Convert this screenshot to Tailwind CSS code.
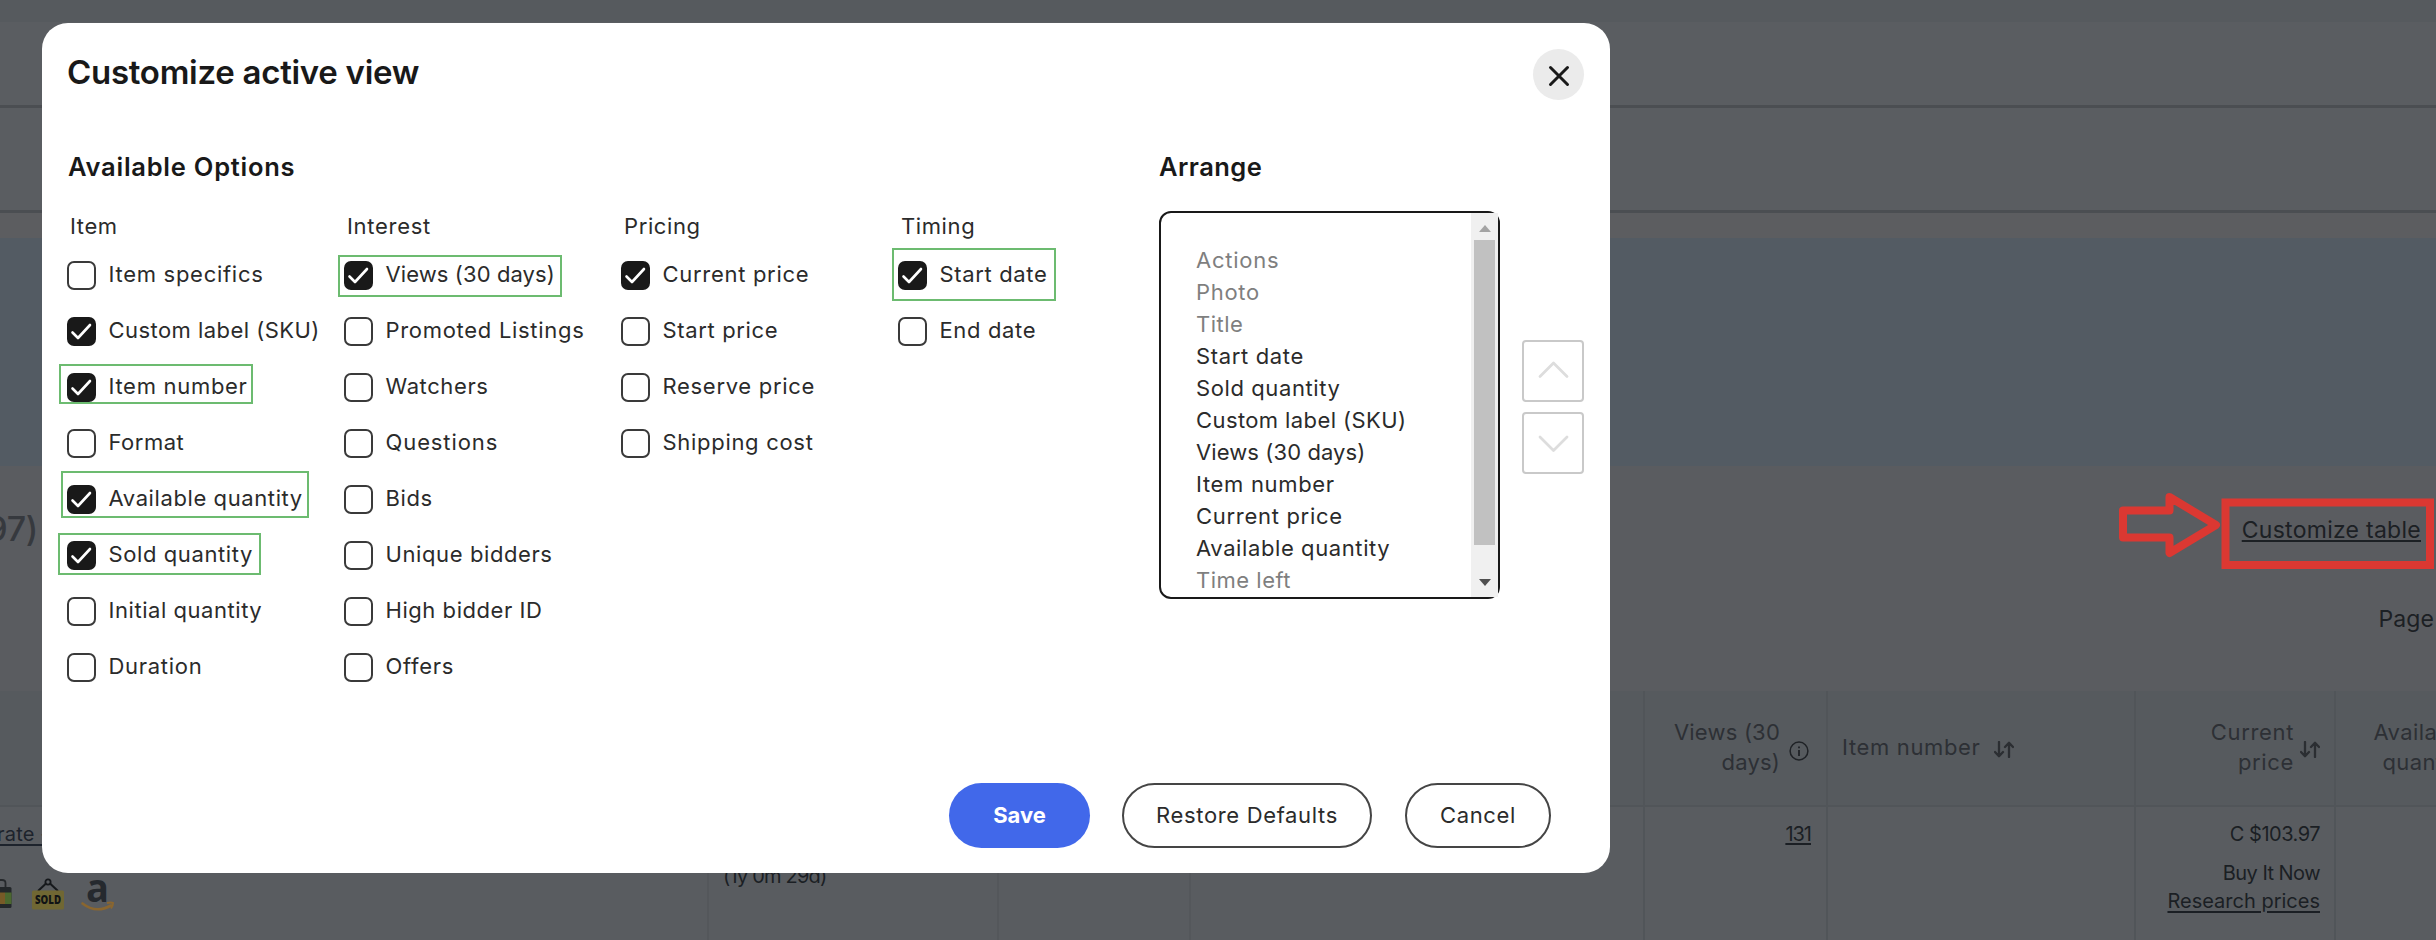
<!DOCTYPE html>
<html lang="en">
<head>
<meta charset="utf-8">
<title>Customize active view</title>
<script src="https://cdn.jsdelivr.net/npm/@tailwindcss/browser@4"></script>
</head>
<body class="font-['Inter','Liberation_Sans',sans-serif]">
<svg class="hidden">
  <symbol id="check" viewBox="0 0 29 29"><path d="M5.500 15.500 L11 21 L23 8" fill="none" stroke="#fff" stroke-width="2.600" stroke-linecap="round" stroke-linejoin="round"/></symbol>
  <symbol id="sort" viewBox="0 0 20 17"><path d="M5 1 V15 M1 11 L5 15.200 L9 11 M15 16 V2 M11 6 L15 1.800 L19 6" fill="none" stroke="#2b2e32" stroke-width="2.300" stroke-linecap="round" stroke-linejoin="round"/></symbol>
</svg>
<div class="relative w-[2436px] h-[940px] overflow-hidden bg-[#5a5c60] flex flex-col">

  <!-- Page behind the dialog -->
  <div class="h-[22px] bg-[#565a5e] shrink-0"></div>
  <div class="h-[86px] bg-[#5a5d61] border-b-[3px] border-[#4b4e52] shrink-0"></div>
  <div class="h-[105px] bg-[#5a5d61] border-b-[3px] border-[#4b4e52] shrink-0"></div>
  <div class="h-[25px] bg-[#5c5d60] shrink-0"></div>
  <div class="h-[228px] bg-[#535b63] shrink-0"></div>
  <div class="h-[225px] shrink-0 flex justify-between">
    <div class="w-[38px] pt-[43px] flex justify-end text-[34px] leading-[40px] font-medium text-[#36393e] tracking-[-0.3px]"><span>97)</span></div>
    <div class="flex flex-col items-end pt-[49px] text-[#1c2024]">
      <a class="mr-[15px] text-[23px] leading-[30px] tracking-[0.27px] underline decoration-2 underline-offset-[2px]">Customize table</a>
      <span class="mr-[2px] mt-[59px] text-[23px] leading-[30px] tracking-[0.1px]">Page</span>
    </div>
  </div>

  <div class="shrink-0 w-[2496px] h-[116px] bg-[#565a5e] border-b-2 border-[#515559] grid grid-cols-[707px_290px_192px_454px_183px_308px_200px_162px] text-[22px] leading-[30px] text-[#2d3035]">
    <div></div>
    <div></div>
    <div></div>
    <div></div>
    <div class="border-l-2 border-[#515559] flex items-center justify-end pr-[17px] gap-[9px] pb-[2px]">
      <div class="text-right tracking-[0.2px]">Views (30<br>days)</div>
      <svg class="w-5 h-5 mt-[7px]" viewBox="0 0 20 20" fill="none" stroke="#1f2226"><circle cx="10" cy="10" r="8.900" stroke-width="1.500"/><path d="M10 9 V15 M10 5.500 V7.300" stroke-width="1.800"/></svg>
    </div>
    <div class="border-l-2 border-[#515559] flex items-center pl-[14px] gap-[13px] pb-[2px]">
      <span class="tracking-[0.65px]">Item number</span>
      <svg class="w-5 h-[17px] mt-[5px]"><use href="#sort"/></svg>
    </div>
    <div class="border-l-2 border-[#515559] flex items-center justify-end pr-[14px] gap-[6px] pb-[2px]">
      <div class="text-right tracking-[0.65px]">Current<br>price</div>
      <svg class="w-5 h-[17px] mt-[5px]"><use href="#sort"/></svg>
    </div>
    <div class="border-l-2 border-[#515559] flex items-center justify-end pr-[26px] pb-[2px]">
      <div class="text-right tracking-[0.4px]">Available<br>quantity</div>
    </div>
  </div>

  <div class="shrink-0 w-[2496px] h-[133px] bg-[#595c60] grid grid-cols-[707px_290px_192px_454px_183px_308px_200px_162px] text-[20px] leading-[28px] text-[#1b1f24]">
    <div class="pt-[13px]">
      <div class="underline decoration-2 underline-offset-[3px] text-[#1d232c] -ml-[3px] whitespace-pre tracking-[0.2px]">rate - </div>
      <div class="flex items-start mt-[30px]">
        <svg class="w-[12px] h-[32px]" viewBox="0 0 12 32"><path d="M-4 10 V5 Q-4 2 0 2 H2 Q5.500 2 5.500 5 V10" fill="none" stroke="#26292c" stroke-width="1.800"/><rect x="-6" y="9" width="17.500" height="21" rx="1.500" fill="#23272a"/><rect x="-6" y="14.500" width="11" height="11.500" fill="#775a27"/><rect x="5" y="14.500" width="6.500" height="11.500" fill="#4b682f"/></svg>
        <svg class="w-[32px] h-[32px] ml-[20px]" viewBox="0 0 32 32"><circle cx="16" cy="4" r="2.600" fill="none" stroke="#16191c" stroke-width="1.800"/><path d="M14 5.500 L6 13 M18 5.500 L26 13" stroke="#16191c" stroke-width="2"/><rect x="0" y="12.500" width="32" height="19" rx="1.500" fill="#706733"/><text x="16" y="26.300" text-anchor="middle" font-family="Open Sans" font-size="12" font-weight="800" fill="#111315" textLength="26" lengthAdjust="spacingAndGlyphs">SOLD</text></svg>
        <svg class="w-[34px] h-[34px] ml-[17px]" viewBox="0 0 34 34"><text x="5" y="23.500" font-family="Open Sans" font-size="40" font-weight="700" fill="#25292e" textLength="23" lengthAdjust="spacingAndGlyphs">a</text><path d="M1.500 25.500 Q15 36 30 27.500" fill="none" stroke="#8a662f" stroke-width="2.600" stroke-linecap="round"/><path d="M26 25 Q30 24 32 25 Q32 28 30 30.500" fill="none" stroke="#8a662f" stroke-width="2"/></svg>
      </div>
    </div>
    <div class="border-l-2 border-[#54575b] pt-[55px] pl-[14px] tracking-[-0.8px]">(1y 0m 29d)</div>
    <div class="border-l-2 border-[#54575b]"></div>
    <div class="border-l-2 border-[#54575b]"></div>
    <div class="border-l-2 border-[#515559] pt-[13px] pr-[15px] text-right"><a class="underline decoration-2 underline-offset-[2px] tracking-[-1px]">131</a></div>
    <div class="border-l-2 border-[#515559]"></div>
    <div class="border-l-2 border-[#515559] pt-[13px] pr-[14px] text-right flex flex-col items-end">
      <span class="tracking-[-0.5px]">C $103.97</span>
      <span class="mt-[11px] tracking-[-0.55px]">Buy It Now</span>
      <a class="underline decoration-2 underline-offset-[3px]">Research prices</a>
    </div>
    <div class="border-l-2 border-[#515559]"></div>
  </div>

  <!-- Callout pointing at the link -->
  <svg class="absolute left-[2110px] top-[484px] w-[326px] h-[96px]" viewBox="0 0 326 96" fill="none" stroke="#db3832" stroke-width="8"><path d="M13 26.500 H59.500 V13 L106 41 L59.500 69 V53.500 H13 Z" stroke-linejoin="round"/><rect x="115.500" y="18.500" width="204.500" height="62.500"/></svg>

  <!-- Dialog -->
  <div class="absolute left-[42px] top-[23px] w-[1568px] h-[850px] rounded-[26px] bg-white text-[#2b2b2b] flex flex-col">
    <div class="h-[98px] shrink-0 pl-[25px] pr-[26px] flex items-center justify-between">
      <h1 class="text-[33px] leading-[40px] font-semibold text-[#191919] tracking-[-0.28px]">Customize active view</h1>
      <button class="w-[51px] h-[51px] mt-[5px] rounded-full bg-[#ebebeb] flex items-center justify-center">
        <svg class="w-[24px] h-[24px]" viewBox="0 0 24 24"><path d="M3.500 4.500 L20.500 21.500 M20.500 4.500 L3.500 21.500" stroke="#191919" stroke-width="3" stroke-linecap="round"/></svg>
      </button>
    </div>

    <div class="flex">
      <div class="w-[1117px] shrink-0 pl-[25px] pt-[31px]">
        <h2 class="pl-px text-[25.5px] leading-[30px] font-semibold text-[#191919] tracking-[0.75px]">Available Options</h2>
        <div class="mt-[22px] grid grid-cols-[277px_277px_277px_277px] items-start text-[22px] leading-[28px]">
          <div>
            <div class="h-[43px] flex items-center pl-[3px] tracking-[0.6px]">Item</div>
            <label class="h-[56px] flex items-center gap-[12.5px]"><i class="w-[29px] h-[29px] rounded-[7px] border-2 border-[#3a3a3a]"></i><span class="pb-[2px] tracking-[0.72px]">Item specifics</span></label>
            <label class="h-[56px] flex items-center gap-[12.5px]"><i class="w-[29px] h-[29px] rounded-[7px] bg-[#191919]"><svg class="w-full h-full"><use href="#check"/></svg></i><span class="pb-[2px] tracking-[0.45px]">Custom label (SKU)</span></label>
            <label class="h-[56px] flex items-center gap-[12.5px]"><i class="w-[29px] h-[29px] rounded-[7px] bg-[#191919]"><svg class="w-full h-full"><use href="#check"/></svg></i><span class="pb-[2px] tracking-[0.7px]">Item number</span></label>
            <label class="h-[56px] flex items-center gap-[12.5px]"><i class="w-[29px] h-[29px] rounded-[7px] border-2 border-[#3a3a3a]"></i><span class="pb-[2px] tracking-[0.5px]">Format</span></label>
            <label class="h-[56px] flex items-center gap-[12.5px]"><i class="w-[29px] h-[29px] rounded-[7px] bg-[#191919]"><svg class="w-full h-full"><use href="#check"/></svg></i><span class="pb-[2px] tracking-[0.6px]">Available quantity</span></label>
            <label class="h-[56px] flex items-center gap-[12.5px]"><i class="w-[29px] h-[29px] rounded-[7px] bg-[#191919]"><svg class="w-full h-full"><use href="#check"/></svg></i><span class="pb-[2px] tracking-[0.6px]">Sold quantity</span></label>
            <label class="h-[56px] flex items-center gap-[12.5px]"><i class="w-[29px] h-[29px] rounded-[7px] border-2 border-[#3a3a3a]"></i><span class="pb-[2px] tracking-[0.55px]">Initial quantity</span></label>
            <label class="h-[56px] flex items-center gap-[12.5px]"><i class="w-[29px] h-[29px] rounded-[7px] border-2 border-[#3a3a3a]"></i><span class="pb-[2px] tracking-[0.7px]">Duration</span></label>
          </div>
          <div>
            <div class="h-[43px] flex items-center pl-[3px] tracking-[0.7px]">Interest</div>
            <label class="h-[56px] flex items-center gap-[12.5px]"><i class="w-[29px] h-[29px] rounded-[7px] bg-[#191919]"><svg class="w-full h-full"><use href="#check"/></svg></i><span class="pb-[2px] tracking-[0.1px]">Views (30 days)</span></label>
            <label class="h-[56px] flex items-center gap-[12.5px]"><i class="w-[29px] h-[29px] rounded-[7px] border-2 border-[#3a3a3a]"></i><span class="pb-[2px] tracking-[0.7px]">Promoted Listings</span></label>
            <label class="h-[56px] flex items-center gap-[12.5px]"><i class="w-[29px] h-[29px] rounded-[7px] border-2 border-[#3a3a3a]"></i><span class="pb-[2px] tracking-[0.6px]">Watchers</span></label>
            <label class="h-[56px] flex items-center gap-[12.5px]"><i class="w-[29px] h-[29px] rounded-[7px] border-2 border-[#3a3a3a]"></i><span class="pb-[2px] tracking-[0.9px]">Questions</span></label>
            <label class="h-[56px] flex items-center gap-[12.5px]"><i class="w-[29px] h-[29px] rounded-[7px] border-2 border-[#3a3a3a]"></i><span class="pb-[2px] tracking-[0.6px]">Bids</span></label>
            <label class="h-[56px] flex items-center gap-[12.5px]"><i class="w-[29px] h-[29px] rounded-[7px] border-2 border-[#3a3a3a]"></i><span class="pb-[2px] tracking-[0.6px]">Unique bidders</span></label>
            <label class="h-[56px] flex items-center gap-[12.5px]"><i class="w-[29px] h-[29px] rounded-[7px] border-2 border-[#3a3a3a]"></i><span class="pb-[2px] tracking-[0.55px]">High bidder ID</span></label>
            <label class="h-[56px] flex items-center gap-[12.5px]"><i class="w-[29px] h-[29px] rounded-[7px] border-2 border-[#3a3a3a]"></i><span class="pb-[2px] tracking-[0.7px]">Offers</span></label>
          </div>
          <div>
            <div class="h-[43px] flex items-center pl-[3px] tracking-[0.6px]">Pricing</div>
            <label class="h-[56px] flex items-center gap-[12.5px]"><i class="w-[29px] h-[29px] rounded-[7px] bg-[#191919]"><svg class="w-full h-full"><use href="#check"/></svg></i><span class="pb-[2px] tracking-[0.7px]">Current price</span></label>
            <label class="h-[56px] flex items-center gap-[12.5px]"><i class="w-[29px] h-[29px] rounded-[7px] border-2 border-[#3a3a3a]"></i><span class="pb-[2px] tracking-[0.65px]">Start price</span></label>
            <label class="h-[56px] flex items-center gap-[12.5px]"><i class="w-[29px] h-[29px] rounded-[7px] border-2 border-[#3a3a3a]"></i><span class="pb-[2px] tracking-[0.7px]">Reserve price</span></label>
            <label class="h-[56px] flex items-center gap-[12.5px]"><i class="w-[29px] h-[29px] rounded-[7px] border-2 border-[#3a3a3a]"></i><span class="pb-[2px] tracking-[0.7px]">Shipping cost</span></label>
          </div>
          <div>
            <div class="h-[43px] flex items-center pl-[3px] tracking-[0.6px]">Timing</div>
            <label class="h-[56px] flex items-center gap-[12.5px]"><i class="w-[29px] h-[29px] rounded-[7px] bg-[#191919]"><svg class="w-full h-full"><use href="#check"/></svg></i><span class="pb-[2px] tracking-[0.65px]">Start date</span></label>
            <label class="h-[56px] flex items-center gap-[12.5px]"><i class="w-[29px] h-[29px] rounded-[7px] border-2 border-[#3a3a3a]"></i><span class="pb-[2px] tracking-[0.65px]">End date</span></label>
          </div>
        </div>
      </div>

      <div class="pt-[31px]">
        <h2 class="text-[25.5px] leading-[30px] font-semibold text-[#191919] tracking-[0.45px]">Arrange</h2>
        <div class="mt-[29px] flex">
          <div class="w-[341px] h-[388px] border-2 border-[#191919] rounded-[12px] flex justify-between">
            <ul class="pl-[35px] pt-[31px] text-[22px] leading-[32px]">
              <li class="text-[#7f7f7f] tracking-[0.75px]">Actions</li>
              <li class="text-[#7f7f7f] tracking-[0.7px]">Photo</li>
              <li class="text-[#7f7f7f] tracking-[0.5px]">Title</li>
              <li class="tracking-[0.65px]">Start date</li>
              <li class="tracking-[0.6px]">Sold quantity</li>
              <li class="tracking-[0.4px]">Custom label (SKU)</li>
              <li class="tracking-[0.1px]">Views (30 days)</li>
              <li class="tracking-[0.68px]">Item number</li>
              <li class="tracking-[0.7px]">Current price</li>
              <li class="tracking-[0.6px]">Available quantity</li>
              <li class="text-[#7f7f7f] tracking-[0.5px]">Time left</li>
            </ul>
            <div class="w-[27px] bg-[#f0f0f0] flex flex-col items-center justify-between pt-[12px] pb-[11px]">
              <svg class="w-[12px] h-[7px]" viewBox="0 0 12 7"><path d="M0 7 L6 0 L12 7 Z" fill="#a3a3a3"/></svg>
              <div class="w-[21px] h-[305px] mb-[27px] bg-[#c1c1c1]"></div>
              <svg class="w-[12px] h-[7px]" viewBox="0 0 12 7"><path d="M0 0 L6 7 L12 0 Z" fill="#505050"/></svg>
            </div>
          </div>
          <div class="ml-[22px] mt-[129px] flex flex-col gap-[10px]">
            <button class="w-[62px] h-[62px] border-2 border-[#c9c9c9] rounded-[4px] flex items-center justify-center"><svg class="w-[32px] h-[22px]" viewBox="0 0 32 22" fill="none" stroke="#dddddd" stroke-width="2.800" stroke-linecap="round" stroke-linejoin="round"><path d="M3 16.500 L16.500 3 L30 16.500"/></svg></button>
            <button class="w-[62px] h-[62px] border-2 border-[#c9c9c9] rounded-[4px] flex items-center justify-center"><svg class="w-[32px] h-[22px]" viewBox="0 0 32 22" fill="none" stroke="#dddddd" stroke-width="2.800" stroke-linecap="round" stroke-linejoin="round"><path d="M3 5 L16.500 18.500 L30 5"/></svg></button>
          </div>
        </div>
      </div>
    </div>

    <div class="mt-auto mb-[25px] pr-[59px] h-[65px] shrink-0 flex justify-end text-[22px]">
      <button class="w-[141px] rounded-full bg-[#4168ea] text-white font-bold">Save</button>
      <button class="w-[250px] ml-[32px] rounded-full border-2 border-[#454545] text-[#2b2b2b] tracking-[0.65px]">Restore Defaults</button>
      <button class="w-[146px] ml-[33px] rounded-full border-2 border-[#454545] text-[#2b2b2b] tracking-[0.65px]">Cancel</button>
    </div>

    <!-- Highlight frames around chosen options -->
    <div class="absolute left-[296px] top-[232px] w-[224px] h-[42px] border-2 border-[#6cbb70]"></div>
    <div class="absolute left-[17px] top-[341px] w-[194px] h-[40px] border-2 border-[#6cbb70]"></div>
    <div class="absolute left-[19px] top-[448px] w-[248px] h-[47px] border-2 border-[#6cbb70]"></div>
    <div class="absolute left-[16px] top-[510px] w-[203px] h-[42px] border-2 border-[#6cbb70]"></div>
    <div class="absolute left-[850px] top-[225px] w-[164px] h-[53px] border-2 border-[#6cbb70]"></div>
  </div>
</div>
</body>
</html>
